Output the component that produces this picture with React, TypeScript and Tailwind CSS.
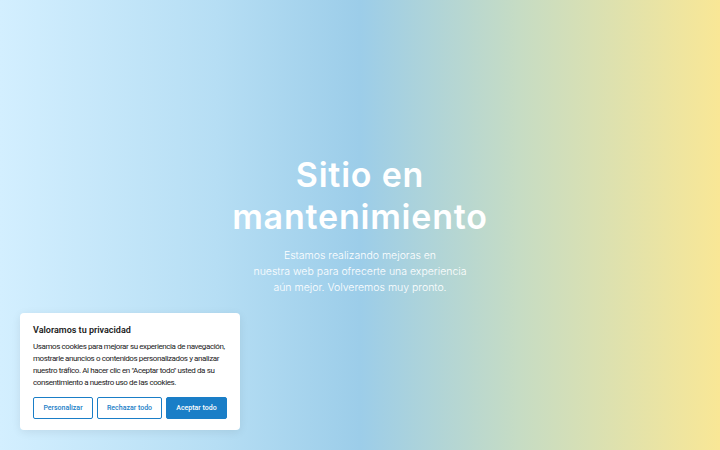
export default function App() {
  return (
    <div className="relative h-[450px] w-[720px] overflow-hidden bg-[linear-gradient(90deg,#d3efff_0%,#b6def4_30%,#9ccde9_50%,#c6dcc4_72%,#f9e796_100%)] font-['Inter',sans-serif]">
      <div className="flex flex-col items-center pt-[154px] text-center text-white">
        <h1 className="text-[34px] font-semibold leading-[42px] tracking-[0.8px]">
          Sitio en
          <br />
          mantenimiento
        </h1>
        <p className="mt-[10px] w-[230px] text-[10.5px] leading-[16px] font-light">
          Estamos realizando mejoras en
          <br />
          nuestra web para ofrecerte una experiencia
          <br />
          aún mejor. Volveremos muy pronto.
        </p>
      </div>

      <div className="absolute left-[20px] top-[313px] w-[220px] rounded-[4px] bg-white px-[13px] pt-[10px] pb-[11px] font-['Roboto',sans-serif] shadow-[0_2px_10px_rgba(0,0,0,0.08)]">
        <h2 className="text-[9px] font-semibold leading-[14px] text-[#212121]">Valoramos tu privacidad</h2>
        <p className="mt-[4px] text-[8px] leading-[12px] tracking-[-0.4px] text-[#212121]">
          Usamos cookies para mejorar su experiencia de navegación, mostrarle anuncios o contenidos personalizados y analizar nuestro tráfico. Al hacer clic en "Aceptar todo" usted da su consentimiento a nuestro uso de las cookies.
        </p>
        <div className="mt-[8px] flex gap-[4px]">
          <button className="h-[22px] w-[60px] rounded-[2px] border-[1.5px] border-[#1a7ec7] text-[7px] font-medium text-[#1a7ec7]">
            Personalizar
          </button>
          <button className="h-[22px] w-[65px] rounded-[2px] border-[1.5px] border-[#1a7ec7] text-[7px] font-medium text-[#1a7ec7]">
            Rechazar todo
          </button>
          <button className="h-[22px] w-[61px] rounded-[2px] border-[1.5px] border-[#1a7ec7] bg-[#1a7ec7] text-[7px] font-medium text-white">
            Aceptar todo
          </button>
        </div>
      </div>
    </div>
  )
}
